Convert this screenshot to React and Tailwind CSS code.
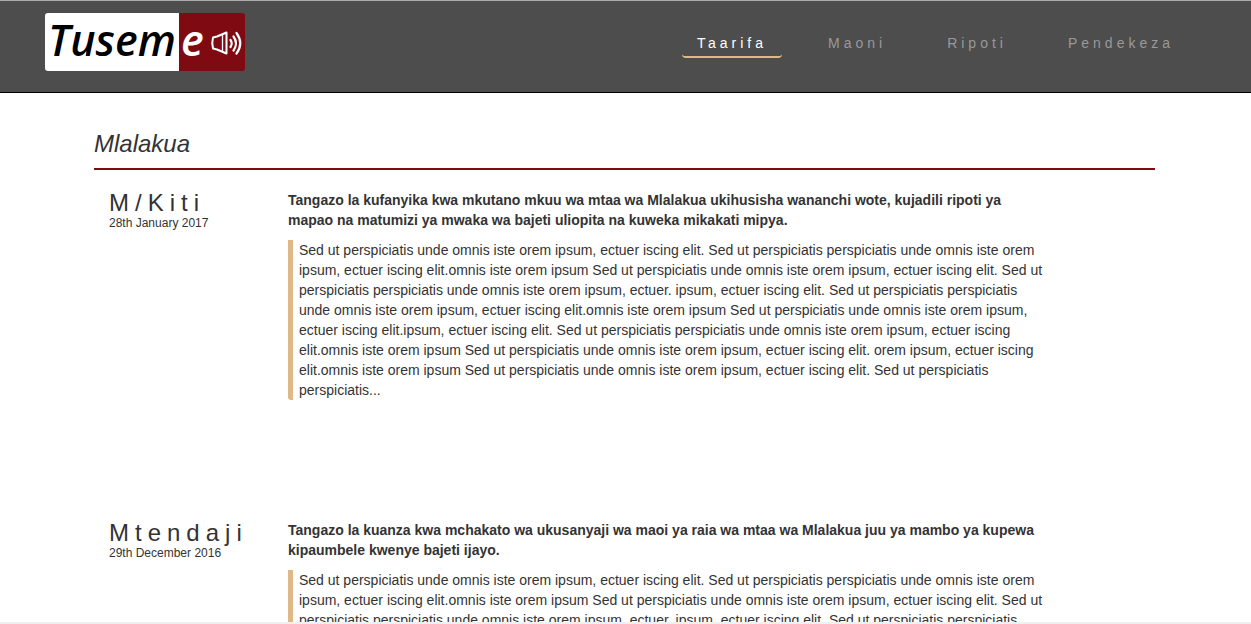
import React from "react";

const body =
  "Sed ut perspiciatis unde omnis iste orem ipsum, ectuer iscing elit. Sed ut perspiciatis perspiciatis unde omnis iste orem ipsum, ectuer iscing elit.omnis iste orem ipsum Sed ut perspiciatis unde omnis iste orem ipsum, ectuer iscing elit. Sed ut perspiciatis perspiciatis unde omnis iste orem ipsum, ectuer. ipsum, ectuer iscing elit. Sed ut perspiciatis perspiciatis unde omnis iste orem ipsum, ectuer iscing elit.omnis iste orem ipsum Sed ut perspiciatis unde omnis iste orem ipsum, ectuer iscing elit.ipsum, ectuer iscing elit. Sed ut perspiciatis perspiciatis unde omnis iste orem ipsum, ectuer iscing elit.omnis iste orem ipsum Sed ut perspiciatis unde omnis iste orem ipsum, ectuer iscing elit. orem ipsum, ectuer iscing elit.omnis iste orem ipsum Sed ut perspiciatis unde omnis iste orem ipsum, ectuer iscing elit. Sed ut perspiciatis perspiciatis...";

const notices = [
  {
    author: "M/Kiti",
    date: "28th January 2017",
    title:
      "Tangazo la kufanyika kwa mkutano mkuu wa mtaa wa Mlalakua ukihusisha wananchi wote, kujadili ripoti ya mapao na matumizi ya mwaka wa bajeti uliopita na kuweka mikakati mipya.",
  },
  {
    author: "Mtendaji",
    date: "29th December 2016",
    title:
      "Tangazo la kuanza kwa mchakato wa ukusanyaji wa maoi ya raia wa mtaa wa Mlalakua juu ya mambo ya kupewa kipaumbele kwenye bajeti ijayo.",
  },
];

const links = ["Taarifa", "Maoni", "Ripoti", "Pendekeza"];

function Logo() {
  return (
    <a href="#" aria-label="Tuseme" className="block shrink-0">
      <svg width="200" height="58" viewBox="0 0 200 58" className="block rounded-[3px]">
        <rect width="134" height="58" fill="#fff" />
        <rect x="134" width="66" height="58" fill="#800a12" />
        <g
          fontSize="43"
          fontWeight="600"
          fontStyle="italic"
          className="font-['Open_Sans',sans-serif]"
        >
          <text x="3" y="43" fill="#000">Tusem</text>
          <text x="136" y="43" fill="#fff">e</text>
        </g>
        <g fill="none" stroke="#fff" strokeLinecap="round" strokeLinejoin="round">
          <path d="M168 24.500 L172 23.500 L181.500 19.500 V40.500 L172 36.500 L168 35.500 Q166.500 30 168 24.500Z" strokeWidth="2" />
          <path d="M177.500 22V38" strokeWidth="1.300" />
          <path d="M185.500 27Q188 30.500 185.500 34" strokeWidth="2.200" />
          <path d="M188.500 23.500Q193.500 30.500 188.500 37.500" strokeWidth="2.200" />
          <path d="M191.500 20Q199 30.500 191.500 40.500" strokeWidth="2.200" />
        </g>
      </svg>
    </a>
  );
}

function Header() {
  return (
    <header className="flex shrink-0 items-start justify-between border-t border-b border-t-[#a9adab] border-b-black bg-[#4d4d4d] pt-3 pr-[62px] pb-[21px] pl-[45px]">
      <Logo />
      <nav className="pt-5">
        <ul className="flex gap-[31px]">
          {links.map((label, i) => (
            <li key={label}>
              <a
                href="#"
                className={
                  "block rounded-[4px] border-b-2 px-[15px] pb-[3px] text-[14px] leading-5 tracking-[4px] " +
                  (i === 0
                    ? "border-[#deb887] text-white"
                    : "border-transparent text-[#999999]")
                }
              >
                {label}
              </a>
            </li>
          ))}
        </ul>
      </nav>
    </header>
  );
}

function Notice({ author, date, title }) {
  return (
    <article className="flex gap-[30px] px-[15px] pb-[120px]">
      <div className="w-[149px] shrink-0 pt-px">
        <h2 className="text-[24px] leading-6 tracking-[6px]">{author}</h2>
        <p className="text-[12px] leading-4">{date}</p>
      </div>
      <div className="max-w-[759px] flex-1">
        <h3 className="mb-2.5 text-[14px] leading-5 font-bold">{title}</h3>
        <p className="rounded-b-[3px] border-l-[5px] border-[#deb887] pl-1.5 text-[14px] leading-5">
          {body}
        </p>
      </div>
    </article>
  );
}

export default function App() {
  return (
    <div className="flex h-screen flex-col bg-white font-['Liberation_Sans',Arial,sans-serif] text-[#333333]">
      <Header />
      <main className="min-h-0 flex-1 overflow-y-auto pt-9 pr-24 pl-[94px] [scrollbar-width:none]">
        <h1 className="mb-5 border-b-2 border-[#800a12] pb-2.5 text-[24px] leading-[29px] italic">
          Mlalakua
        </h1>
        {notices.map((n) => (
          <Notice key={n.author} {...n} />
        ))}
      </main>
      <div className="h-0.5 shrink-0 bg-[#f0f0f0]" />
    </div>
  );
}
